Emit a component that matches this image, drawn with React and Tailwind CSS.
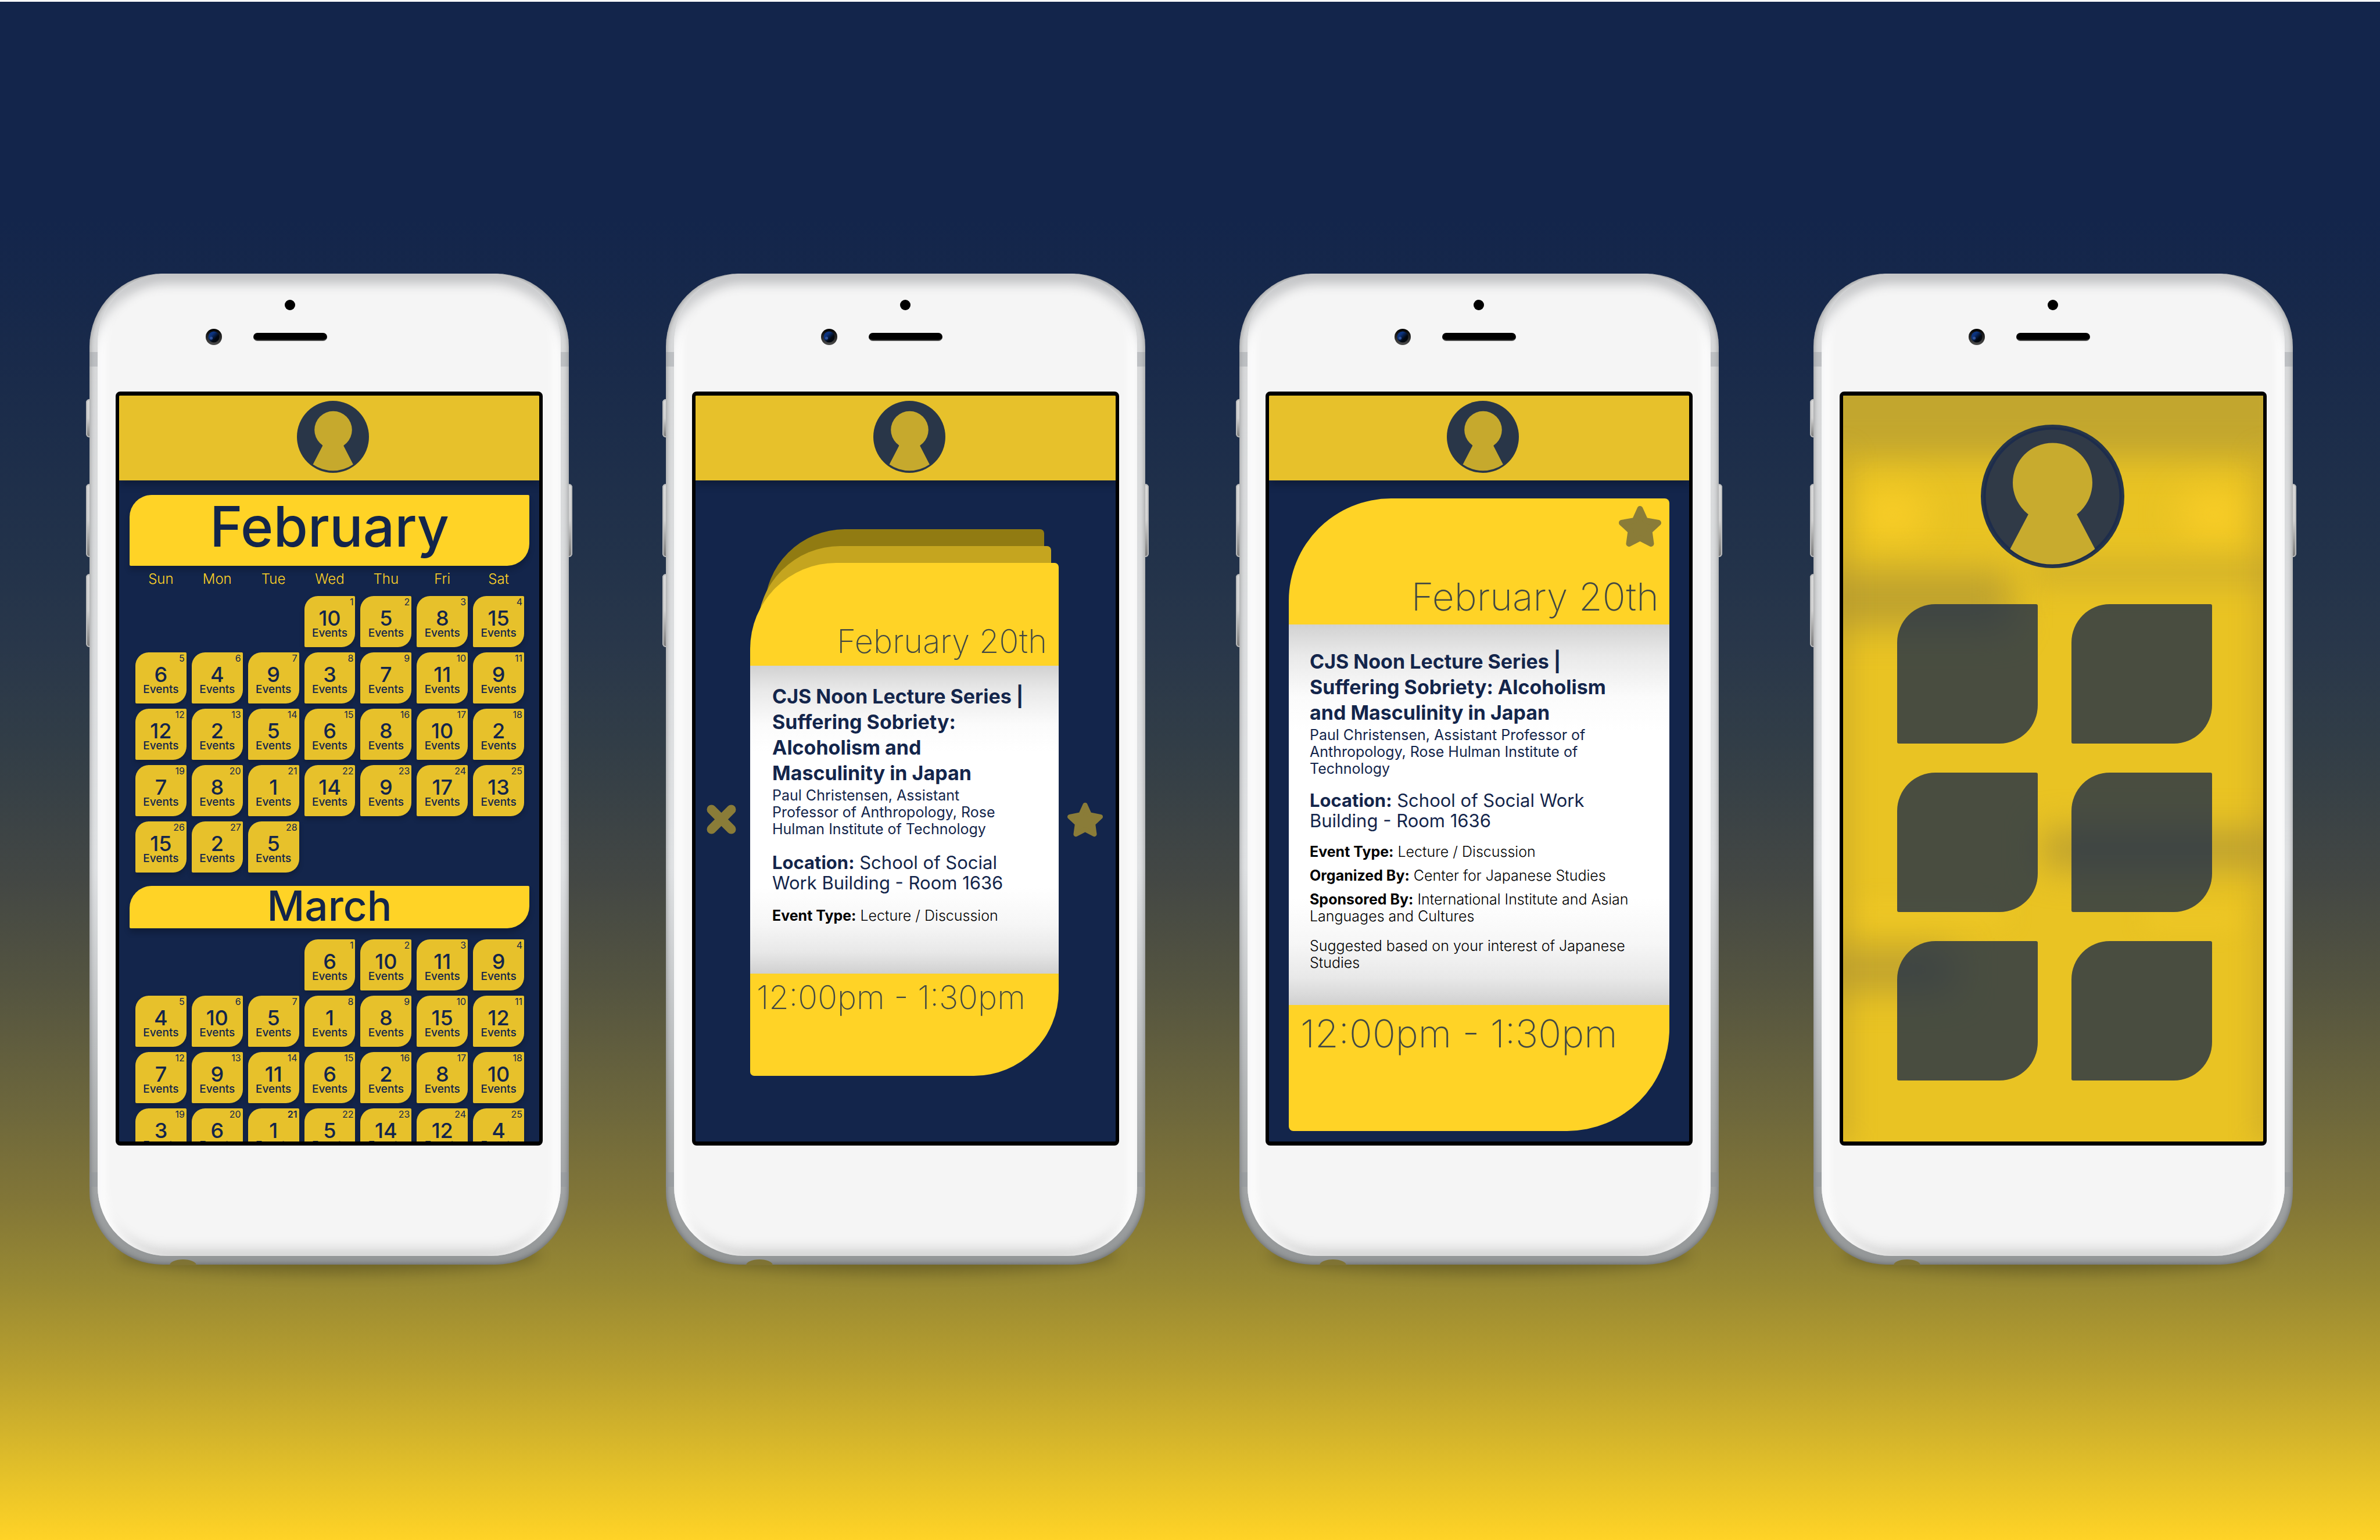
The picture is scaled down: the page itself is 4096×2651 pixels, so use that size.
import React from "react";
import clsx from "clsx";

const WEEKDAYS = ["Sun", "Mon", "Tue", "Wed", "Thu", "Fri", "Sat"];

// Number of events on each day of the month; both months start on a Wednesday.
const FEBRUARY = [
  10, 5, 8, 15, 6, 4, 9, 3, 7, 11, 9, 12, 2, 5, 6, 8, 10, 2, 7, 8, 1, 14, 9, 17, 13, 15, 2, 5,
];
const MARCH = [
  6, 10, 11, 9, 4, 10, 5, 1, 8, 15, 12, 7, 9, 11, 6, 2, 8, 10, 3, 6, 1, 5, 14, 12, 4,
];

function Avatar() {
  return (
    <button aria-label="Profile" className="block size-[124px]">
      <svg viewBox="0 0 124 124" className="size-full">
        <circle cx="62" cy="62" r="62" fill="#293648" />
        <circle cx="62.5" cy="50" r="32.3" fill="#c6a92d" />
        <path d="M40 68 L44.3 77.3 L27.6 109.5 A61 61 0 0 0 96.8 109.5 L80.2 77.3 L85 68 Z" fill="#c6a92d" />
      </svg>
    </button>
  );
}

function LargeAvatar() {
  return (
    <button aria-label="Profile" className="block size-[247px]">
      <svg viewBox="0 0 247 247" className="size-full">
        <circle cx="123.5" cy="123.5" r="123.5" fill="#263549" />
        <circle cx="123.5" cy="123.5" r="117" fill="#303a47" stroke="#1d2c4c" strokeWidth="4" />
        <circle cx="123.5" cy="100" r="68.5" fill="#c8ab2e" />
        <path d="M72 140 L82 154 L50.5 214 A114 114 0 0 0 196.5 214 L165 154 L175 140 Z" fill="#c8ab2e" />
      </svg>
    </button>
  );
}

function Star({ className }) {
  return (
    <svg viewBox="0 0 73 70" className={className}>
      <path
        d="M36.5 5 L45.4 24.8 L68 29 L52.5 43.2 L55.5 65 L36.5 55.2 L17.5 65 L20.5 43.2 L5 29 L27.6 24.8 Z"
        fill="#8a7c38"
        stroke="#8a7c38"
        strokeWidth="10"
        strokeLinejoin="round"
      />
    </svg>
  );
}

function Cross({ className }) {
  return (
    <svg viewBox="0 0 51 51" className={className}>
      <path d="M8.5 8.5 L42.5 42.5 M42.5 8.5 L8.5 42.5" stroke="#8a7c38" strokeWidth="16" strokeLinecap="round" />
    </svg>
  );
}

function SideButton({ className }) {
  return (
    <span
      className={clsx(
        "absolute w-[14px] rounded-[6px] bg-gradient-to-b from-[#d9d9d9] via-[#d2d2d2] to-[#7a7a7a] shadow-[inset_0_0_0_2px_#b9babb]",
        className
      )}
    />
  );
}

function AntennaBand({ className }) {
  return <span className={clsx("absolute h-[25px] w-[14px] bg-[#8b9398]/35", className)} />;
}

function Phone({ sensorClass = "pl-[267px]", children }) {
  return (
    <div className="relative">
      <SideButton className="-left-[6px] top-[216px] h-[66px]" />
      <SideButton className="-left-[6px] top-[362px] h-[126px]" />
      <SideButton className="-left-[6px] top-[517px] h-[126px]" />
      <SideButton className="-right-[6px] top-[362px] h-[126px]" />
      <span className="absolute inset-x-[50px] bottom-0 h-[60px] rounded-[50%] shadow-[0_14px_24px_rgba(0,0,0,0.25)]" />
      <div className="relative overflow-hidden rounded-[126px] bg-gradient-to-b from-[#d6d7d8] from-0% via-[#dfe1e3] via-60% to-[#939697] to-100% shadow-[inset_0_0_8px_1px_rgba(0,0,0,0.32)]">
        <AntennaBand className="left-0 top-[135px]" />
        <AntennaBand className="right-0 top-[135px]" />
        <AntennaBand className="bottom-[134px] left-0" />
        <AntennaBand className="bottom-[134px] right-0" />
        <div className="mx-[14px] mb-[15px] rounded-[120px] bg-[#f5f5f5] px-[31px] pb-[190px] shadow-[inset_0_26px_18px_-8px_rgba(90,94,98,0.32),inset_22px_0_16px_-10px_#ffffff,inset_-22px_0_16px_-10px_#ffffff,inset_0_-26px_20px_-14px_rgba(130,130,130,0.3)]">
          <div className={clsx("flex h-[203px] flex-col gap-[32px] pt-[45px]", sensorClass)}>
            <span className="ml-[91px] size-[18px] rounded-full bg-black" />
            <div className="-ml-[45px] flex items-center gap-[54px]">
              <svg viewBox="0 0 28 28" className="size-[28px]">
                <defs>
                  <linearGradient id="ring" x1="0" y1="0" x2="0" y2="1">
                    <stop offset="0" stopColor="#000" />
                    <stop offset="1" stopColor="#4d4d4d" />
                  </linearGradient>
                  <linearGradient id="lens" x1="0" y1="0" x2="1" y2="1">
                    <stop offset="0.3" stopColor="#0c3480" />
                    <stop offset="0.65" stopColor="#02070f" />
                  </linearGradient>
                </defs>
                <circle cx="14" cy="14" r="14" fill="url(#ring)" />
                <circle cx="14" cy="14" r="9.5" fill="url(#lens)" />
                <circle cx="9.5" cy="16" r="2.6" fill="#2f5199" />
              </svg>
              <span className="h-[14px] w-[127px] rounded-full border-b-2 border-[#4a4a4a] bg-black" />
            </div>
          </div>
          <div className="aspect-[734/1296] w-full overflow-hidden rounded-[8px] border-x-[6px] border-y-[7px] border-black bg-[#13254b]">
            {children}
          </div>
        </div>
      </div>
      <span className="absolute -bottom-px left-[138px] h-[10px] w-[46px] rounded-tl-[23px_10px] rounded-tr-[23px_10px] bg-[#7f7334]" />
    </div>
  );
}

function TopBar() {
  return (
    <header className="relative flex h-[146px] justify-center bg-[#e7c12b] pl-[12px] pt-[9px] shadow-[0_6px_14px_rgba(0,0,0,0.28)]">
      <Avatar />
    </header>
  );
}

function MonthBanner({ className, children }) {
  return (
    <h2
      className={clsx(
        "ml-[18px] mr-[17px] flex items-center justify-center rounded-[2px] rounded-br-[38px] rounded-tl-[38px] bg-[#ffd326] font-medium shadow-[0_8px_10px_rgba(0,0,0,0.2)]",
        className
      )}
    >
      {children}
    </h2>
  );
}

function DayGrid({ counts, boldDay }) {
  return (
    <div className="grid grid-cols-7 gap-[9px] pl-[28px] pr-[26px]">
      {counts.map((count, i) => (
        <button
          key={i}
          className={clsx(
            "flex h-[88px] flex-col rounded-[2px] rounded-br-[23px] rounded-tl-[23px] bg-[#e7c12b] text-center shadow-[0_5px_8px_rgba(0,0,0,0.22)]",
            i === 0 && "col-start-4"
          )}
        >
          <span
            className={clsx("w-full pr-[3px] pt-px text-right text-[16px] leading-[18px]", i + 1 === boldDay && "font-semibold")}
          >
            {i + 1}
          </span>
          <span className="w-full text-[36px] font-medium leading-[38px]">{count}</span>
          <span className="w-full text-[19px] font-medium leading-[14px]">Events</span>
        </button>
      ))}
    </div>
  );
}

function CalendarScreen() {
  return (
    <>
      <TopBar />
      <MonthBanner className="mt-[25px] h-[122px] pb-[14px] text-[96px]">February</MonthBanner>
      <div className="grid h-[52px] grid-cols-7 gap-[9px] pl-[28px] pr-[26px] pt-[9px] text-center text-[24px] font-light leading-[28px] text-[#ffd326]">
        {WEEKDAYS.map((day) => (
          <span key={day}>{day}</span>
        ))}
      </div>
      <DayGrid counts={FEBRUARY} />
      <MonthBanner className="mb-[19px] mt-[23px] h-[73px] pb-[5px] text-[71px]">March</MonthBanner>
      <DayGrid counts={MARCH} boldDay={21} />
    </>
  );
}

const PAPER =
  "bg-[linear-gradient(to_bottom,#d2d2d2_0%,#e9e9e9_8%,#fbfbfb_19%,#ffffff_28%,#ffffff_72%,#f6f6f6_84%,#e8e8e8_93%,#d0d0d0_100%)]";

function EventHeading({ title, speaker }) {
  return (
    <div>
      <h3 className="whitespace-pre-line text-[34px] font-bold leading-[44px]">{title}</h3>
      <p className="mt-[2px] whitespace-pre-line text-[25px] leading-[29px]">{speaker}</p>
    </div>
  );
}

function Place({ children }) {
  return (
    <p className="whitespace-pre-line text-[31px] leading-[35px]">
      <b>Location:</b> {children}
    </p>
  );
}

function Detail({ label, children }) {
  return (
    <p className="whitespace-pre-line text-[25px] font-light leading-[29px] text-black">
      {label && <b className="font-bold">{label}:</b>} {children}
    </p>
  );
}

function SwipeScreen() {
  return (
    <>
      <TopBar />
      <div className="flex items-center pl-[19px] pr-[22px] pt-[142px]">
        <button aria-label="Dismiss event">
          <Cross className="size-[51px]" />
        </button>
        <article className="relative ml-[24px] mr-[15px] flex-1">
          <span className="absolute inset-x-[25px] -top-[58px] h-[400px] rounded-tl-[138px] rounded-tr-[7px] bg-[#917b12]" />
          <span className="absolute inset-x-[13px] -top-[29px] h-[400px] rounded-tl-[142px] rounded-tr-[7px] bg-[#c5a51f]" />
          <div className="relative overflow-hidden rounded-[7px] rounded-br-[146px] rounded-tl-[148px] bg-[#ffd326]">
            <p className="flex h-[177px] items-end justify-end pb-[8px] pr-[20px] text-[56px] font-extralight leading-[68px] text-[#13254b]/80">
              February 20th
            </p>
            <div className={clsx("flex h-[530px] flex-col gap-[25px] pl-[38px] pt-[31px]", PAPER)}>
              <EventHeading
                title={"CJS Noon Lecture Series |\nSuffering Sobriety:\nAlcoholism and\nMasculinity in Japan"}
                speaker={"Paul Christensen, Assistant\nProfessor of Anthropology, Rose\nHulman Institute of Technology"}
              />
              <Place>{"School of Social\nWork Building - Room 1636"}</Place>
              <Detail label="Event Type">Lecture / Discussion</Detail>
            </div>
            <p className="h-[176px] pl-[11px] pt-[7px] text-[56px] font-extralight leading-[68px] text-[#13254b]/80">
              12:00pm - 1:30pm
            </p>
          </div>
        </article>
        <button aria-label="Save event">
          <Star className="h-[60px] w-[61px]" />
        </button>
      </div>
    </>
  );
}

function DetailScreen() {
  return (
    <>
      <TopBar />
      <article className="relative mx-[34px] mt-[31px] overflow-hidden rounded-[8px] rounded-br-[176px] rounded-tl-[176px] bg-[#ffd326]">
        <div className="flex h-[217px] flex-col items-end justify-between pb-[9px] pt-[13px]">
          <button aria-label="Saved event" className="mr-[14px]">
            <Star className="h-[70px] w-[73px]" />
          </button>
          <p className="pr-[18px] text-[66px] font-extralight leading-[78px] text-[#13254b]/80">February 20th</p>
        </div>
        <div className={clsx("flex h-[655px] flex-col gap-[22px] pl-[36px] pt-[42px]", PAPER)}>
          <EventHeading
            title={"CJS Noon Lecture Series |\nSuffering Sobriety: Alcoholism\nand Masculinity in Japan"}
            speaker={"Paul Christensen, Assistant Professor of\nAnthropology, Rose Hulman Institute of\nTechnology"}
          />
          <Place>{"School of Social Work\nBuilding - Room 1636"}</Place>
          <div className="flex flex-col gap-[12px]">
            <Detail label="Event Type">Lecture / Discussion</Detail>
            <Detail label="Organized By">Center for Japanese Studies</Detail>
            <Detail label="Sponsored By">{"International Institute and Asian\nLanguages and Cultures"}</Detail>
          </div>
          <Detail>{"Suggested based on your interest of Japanese\nStudies"}</Detail>
        </div>
        <p className="h-[217px] pl-[20px] pt-[10px] text-[66px] font-extralight leading-[78px] text-[#13254b]/80">
          12:00pm - 1:30pm
        </p>
      </article>
    </>
  );
}

function MenuScreen() {
  const tiles = ["Menu item 1", "Menu item 2", "Menu item 3", "Menu item 4", "Menu item 5", "Menu item 6"];
  return (
    <div className="relative h-full overflow-hidden bg-[#e9c323]">
      <div className="absolute -inset-x-[60px] -top-[60px] h-[168px] bg-[#c2a62e] blur-[28px]" />
      <div className="absolute left-[30px] top-[170px] h-[70px] w-[110px] rounded-full bg-[#fdd028] blur-[34px]" />
      <div className="absolute right-[30px] top-[170px] h-[70px] w-[110px] rounded-full bg-[#fdd028] blur-[34px]" />
      <div className="absolute -left-[60px] top-[300px] h-[100px] w-[350px] bg-[#bea22e] blur-[30px]" />
      <div className="absolute -right-[60px] top-[285px] h-[40px] w-[460px] bg-[#d0b02b] blur-[24px]" />
      <div className="absolute -right-[60px] top-[748px] h-[66px] w-[440px] bg-[#bb9f30] blur-[30px]" />
      <div className="absolute -left-[60px] top-[955px] h-[66px] w-[250px] bg-[#b99d30] blur-[32px]" />
      <div className="absolute left-[20px] top-[880px] h-[20px] w-[260px] bg-[#f2ca28] blur-[20px]" />
      <div className="absolute right-[40px] top-[890px] h-[20px] w-[160px] bg-[#f2ca28] blur-[20px]" />
      <div className="absolute -left-[20px] bottom-0 top-[100px] w-[30px] bg-[#b8982c]/60 blur-[22px]" />
      <div className="absolute -right-[20px] bottom-0 top-[100px] w-[30px] bg-[#b8982c]/60 blur-[22px]" />
      <div className="relative flex flex-col items-center gap-[62px] pr-[3px] pt-[50px]">
        <LargeAvatar />
        <nav className="grid w-full grid-cols-2 gap-x-[58px] gap-y-[50px] pl-[93px] pr-[85px]">
          {tiles.map((name) => (
            <button
              key={name}
              aria-label={name}
              className="h-[240px] rounded-[3px] rounded-br-[66px] rounded-tl-[66px] bg-[#13254b]/75"
            />
          ))}
        </nav>
      </div>
    </div>
  );
}

export default function App() {
  return (
    <main
      className="min-h-screen border-t-[3px] border-white bg-[linear-gradient(to_bottom,#13254b_0%,#13254b_14%,#1a2b4a_25%,#22324a_36%,#29374a_42%,#313d47_48%,#434744_57%,#545440_64%,#6d673c_72%,#827637_78%,#978833_83%,#b9a02e_89%,#e6c229_96%,#ffd326_100%)] pb-[100px] pl-[154px] pr-[150px] pt-[468px] font-['Inter',sans-serif] text-[#13254b]"
    >
      <div className="grid grid-cols-[992fr_987fr_988fr_825fr]">
        <section aria-label="Calendar" className="pr-[167px]">
          <Phone sensorClass="pl-[200px]">
            <CalendarScreen />
          </Phone>
        </section>
        <section aria-label="Suggested events" className="pr-[162px]">
          <Phone>
            <SwipeScreen />
          </Phone>
        </section>
        <section aria-label="Event details" className="pr-[163px]">
          <Phone>
            <DetailScreen />
          </Phone>
        </section>
        <section aria-label="Menu">
          <Phone>
            <MenuScreen />
          </Phone>
        </section>
      </div>
    </main>
  );
}
